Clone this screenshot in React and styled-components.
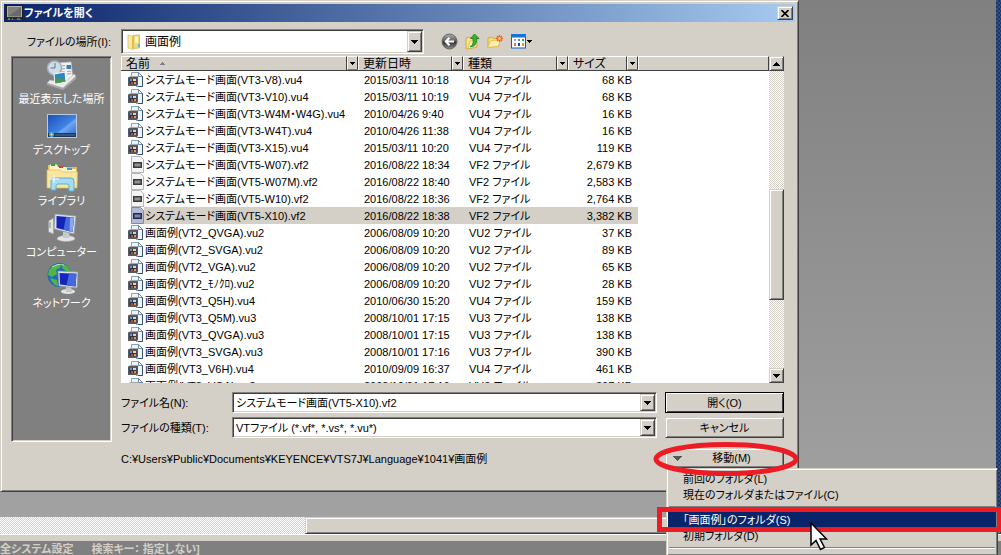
import { useState } from 'react';
import styled, { createGlobalStyle, css } from 'styled-components';

const GlobalStyle = createGlobalStyle`
  * {
    box-sizing: border-box;
  }

  body {
    margin: 0;
    overflow: hidden;
  }

  body, button, input, select {
    font-family: "Liberation Sans", "Noto Sans CJK JP", sans-serif;
    font-size: 11px;
    line-height: 16px;
    font-feature-settings: "palt";
    color: #000;
  }
`;

const face = '#d4d0c8';

const raised = css`
  background: ${face};
  border: 1px solid;
  border-color: ${face} #404040 #404040 ${face};
  box-shadow: inset 1px 1px #fff, inset -1px -1px #808080;
`;

const sunken = css`
  border: 1px solid;
  border-color: #808080 #fff #fff #808080;
  box-shadow: inset 1px 1px #404040, inset -1px -1px ${face};
`;

const dither = css`
  background: repeating-conic-gradient(#fff 0 25%, ${face} 0 50%) 0 0 / 2px 2px;
`;

const Page = styled.div`
  display: flex;
  flex-direction: column;
  height: 100vh;
  overflow: hidden;
`;

const Workspace = styled.div`
  flex: 1;
  display: flex;
  align-items: flex-start;
  background: linear-gradient(#808080, #a2a2a2);
`;

const Desktop = styled.div`
  align-self: stretch;
  width: 5px;
  margin-left: 197px;
  background: repeating-conic-gradient(#1c3468 0 25%, #324f86 0 50%) 0 0 / 4px 4px;
`;

const Dialog = styled.section`
  ${raised}
  flex: 1;
  padding: 3px;
`;

const TitleBar = styled.header`
  display: flex;
  align-items: center;
  gap: 1px;
  height: 18px;
  padding: 0 2px;
  background: linear-gradient(90deg, #0a246a, #a6caf0);
`;

const Title = styled.h1`
  flex: 1;
  margin: 0;
  font-size: 11px;
  color: #fff;
`;

const CloseButton = styled.button`
  ${raised}
  display: grid;
  place-items: center;
  width: 16px;
  height: 14px;
  padding: 0;
`;

const Body = styled.div`
  display: grid;
  grid-template-columns: 101px 1fr;
  grid-template-rows: 25px auto;
  gap: 2px 9px;
  padding: 7px 11px 20px 7px;
`;

const LookInLabel = styled.label`
  align-self: center;
  padding-right: 1px;
  text-align: right;
  white-space: nowrap;
`;

const LookInRow = styled.div`
  display: flex;
  align-items: center;
  gap: 17px;
`;

const Combo = styled.div`
  ${sunken}
  display: grid;
  grid-template-columns: 1fr;
  flex: 0 0 ${(p) => p.$width || 'auto'};
  height: ${(p) => p.$height || 21}px;
  padding: 1px;
  background: #fff;

  > * {
    grid-area: 1 / 1;
  }
`;

const Select = styled.select`
  appearance: none;
  width: 100%;
  min-width: 0;
  padding: 0 18px 0 ${(p) => (p.$icon ? 22 : 2)}px;
  border: 0;
  background: none;
  font-size: ${(p) => (p.$icon ? 12 : 11)}px;
`;

const TextInput = styled.input`
  width: 100%;
  min-width: 0;
  padding: 0 18px 0 2px;
  border: 0;
  outline: 0;
  background: none;
`;

const ComboIcon = styled.span`
  align-self: center;
  justify-self: start;
  height: 16px;
  padding-left: 3px;
`;

const ComboArrow = styled.span`
  ${raised}
  justify-self: end;
  display: grid;
  place-items: center;
  width: 15px;
  pointer-events: none;
`;

const Toolbar = styled.div`
  display: flex;
  align-items: center;
  gap: 7px;
`;

const ToolButton = styled.button`
  display: flex;
  align-items: center;
  gap: 1px;
  padding: 0;
  border: 0;
  background: none;
`;

const Places = styled.nav`
  ${sunken}
  display: flex;
  flex-direction: column;
  gap: 2px;
  margin-bottom: 26px;
  padding-top: 1px;
  background: #808080;
`;

const Place = styled.a`
  display: flex;
  flex-direction: column;
  align-items: center;
  color: #fff;
  text-decoration: none;
  white-space: nowrap;
`;

const FileList = styled.div`
  display: flex;
  height: 327px;
  background: #fff;
`;

const TableArea = styled.div`
  flex: 1;
  overflow: hidden;
`;

const Table = styled.table`
  width: 100%;
  table-layout: fixed;
  border-collapse: collapse;
`;

const Col = styled.col`
  width: ${(p) => (p.$width ? `${p.$width}px` : 'auto')};
`;

const Th = styled.th`
  padding: 0;
  background: ${face};
  font-weight: normal;
  font-size: 12px;
  text-align: left;
`;

const HeadCell = styled.div`
  display: flex;
  height: 15px;
  line-height: 14px;
  border-bottom: 1px solid #404040;
`;

const HeadLabel = styled.span`
  flex: 1;
  display: flex;
  align-items: center;
  gap: 10px;
  padding-left: 4px;
  border-left: 1px solid #fff;
  border-top: 1px solid #fff;
  border-right: 1px solid #404040;
`;

const HeadButton = styled.button`
  display: grid;
  place-items: center;
  width: 11px;
  padding: 0;
  background: ${face};
  border: 1px solid;
  border-color: #fff #404040 #808080 #fff;
`;

const Td = styled.td`
  height: 17px;
  padding: 0 6px;
  text-align: ${(p) => p.$align || 'left'};
  white-space: nowrap;
  background: ${(p) => (p.$selected ? face : 'none')};
`;

const NameTd = styled.td`
  height: 17px;
  padding: 0 0 0 7px;
`;

const NameCell = styled.div`
  display: flex;
  height: 17px;
`;

const FileName = styled.span`
  flex: 1;
  padding: 1px 0 0 1px;
  white-space: nowrap;
  background: ${(p) => (p.$selected ? face : 'none')};
`;

const ScrollBar = styled.div`
  display: flex;
  flex-direction: column;
  width: 15px;
`;

const ScrollButton = styled.button`
  ${raised}
  display: grid;
  place-items: center;
  width: 15px;
  height: 15px;
  padding: 0;
`;

const ScrollTrack = styled.div`
  ${dither}
  flex: 1;
  display: grid;
  grid-template-rows: 118fr 111fr 68fr;
`;

const ScrollThumb = styled.div`
  ${raised}
  grid-row: 2;
`;

const Form = styled.form`
  display: grid;
  grid-template-columns: 103px 1fr 119px;
  gap: 4px 8px;
  align-items: center;
  margin-top: 9px;
`;

const Button = styled.button`
  ${raised}
  width: 100%;
  height: 21px;
  padding: 0;
  ${(p) => p.$primary && css`
    border-color: #000;
    box-shadow: inset 1px 1px #fff, inset -1px -1px #404040;
  `}
`;

const MoveButton = styled(Button)`
  display: grid;
  grid-template-columns: 16px 1fr;
  align-items: center;
  height: 20px;
  padding: 0 8px 0 6px;
`;

const PathText = styled.p`
  grid-column: span 2;
  margin: 8px 0 0;
  white-space: nowrap;
`;

const MoveBox = styled.div`
  position: relative;
  margin-top: 6px;
`;

const Ring = styled.svg`
  position: absolute;
  top: -7px;
  left: -12px;
  width: 146px;
  height: 36px;
  z-index: 2;
  pointer-events: none;
`;

const Menu = styled.ul`
  ${raised}
  position: absolute;
  top: 100%;
  left: 1px;
  z-index: 1;
  width: 332px;
  margin: 0;
  padding: 2px 1px;
  list-style: none;
`;

const MenuItem = styled.li`
  position: relative;
  background: ${(p) => (p.$active ? '#0a246a' : 'none')};
`;

const MenuButton = styled.button`
  display: block;
  width: 100%;
  height: 16px;
  padding: 0 15px;
  border: 0;
  background: none;
  text-align: left;
  color: ${(p) => (p.$active ? '#fff' : '#000')};
`;

const MenuLine = styled.li`
  height: 2px;
  margin: 3px 1px 4px;
  border-top: 1px solid #808080;
  border-bottom: 1px solid #fff;
`;

const Frame = styled.span`
  position: absolute;
  inset: -5px -6px -4px -11px;
  border: 5px solid #ed1c24;
  z-index: 1;
  pointer-events: none;
`;

const Cursor = styled.svg`
  position: absolute;
  top: 10px;
  left: 142px;
  z-index: 2;
  pointer-events: none;
`;

const HorizontalScroll = styled.div`
  ${dither}
  display: grid;
  grid-template-columns: 305px 1fr;
  height: 17px;
`;

const HorizontalThumb = styled.div`
  ${raised}
  grid-column: 2;
`;

const Divider = styled.div`
  height: 7px;
  background: ${face};
  border-top: 1px solid #fff;
`;

const StatusBar = styled.footer`
  display: flex;
  gap: 18px;
  height: 14px;
  overflow: hidden;
  background: #808080;
  color: ${face};
  font-weight: bold;
`;

function Triangle({ up, size = 7, color = '#000' }) {
  const h = Math.ceil(size / 2);
  const points = up ? `0,${h} ${size},${h} ${size / 2},0` : `0,0 ${size},0 ${size / 2},${h}`;
  return (
    <svg width={size} height={h} aria-hidden="true">
      <polygon points={points} fill={color} shapeRendering="crispEdges" />
    </svg>
  );
}

const MonitorIcon = () => (
  <svg width="17" height="16" viewBox="0 0 17 16" aria-hidden="true">
    <rect x=".5" y=".5" width="16" height="13" fill="#2f2f2f" stroke="#1c1c1c" />
    <rect x="1.5" y="1.5" width="14" height="10" fill="#808080" stroke="#b0b0b0" />
    <path d="M2 11.500L15 2v9.500z" fill="#6a6a6a" />
    <path d="M1 14.500h15" stroke="#444" />
    <path d="M2 14h2M6 14h1" stroke="#8ad07a" />
    <path d="M11 14h3" stroke="#b5a58a" />
  </svg>
);

const FolderIcon = () => (
  <svg width="17" height="16" viewBox="0 0 17 16" aria-hidden="true">
    <path d="M7 1.5l6.5-.5v13L7 14.5z" fill="#f4d978" stroke="#cfa943" strokeWidth=".7" />
    <path d="M9 3l3-.5v6l-3 .5z" fill="#fff6cf" />
    <path d="M2 1l5.5 1.5v13L2 14z" fill="#fbe9a4" stroke="#d9b957" strokeWidth=".7" />
    <path d="M6 3v12l2-1V2z" fill="#e4be55" />
    <rect x="12" y="10" width="2" height="3" fill="#6ab0d8" />
  </svg>
);

const BackIcon = () => (
  <svg width="17" height="17" viewBox="0 0 17 17" aria-hidden="true">
    <defs>
      <linearGradient id="back" x2="0" y2="1">
        <stop stopColor="#b0b0b0" />
        <stop offset=".45" stopColor="#606060" />
        <stop offset=".55" stopColor="#333" />
        <stop offset="1" stopColor="#909090" />
      </linearGradient>
    </defs>
    <circle cx="8.5" cy="8.5" r="7.5" fill="url(#back)" stroke="#666" />
    <path d="M13 8.5H5M8.500 4.800L4.800 8.500l3.700 3.700" fill="none" stroke="#fff" strokeWidth="2" />
  </svg>
);

const UpIcon = () => (
  <svg width="15" height="17" viewBox="0 0 15 17" aria-hidden="true">
    <path d="M1 5l4-1 2 1.5 5-1.500v10l-9 2H1z" fill="#f8e08a" stroke="#d6ab3d" />
    <path d="M3 15.5L5 8l8-2-2 8z" fill="#fdf0ae" stroke="#d6ab3d" strokeWidth=".6" />
    <path d="M5 13.500C8 13 8.500 10 8 5.500H5.500L9.500 1l4.500 4.500h-2.500c.5 5-1.500 8.500-6.500 8z" fill="#35b52d" stroke="#16791a" strokeWidth=".8" />
  </svg>
);

const NewFolderIcon = () => (
  <svg width="17" height="16" viewBox="0 0 17 16" aria-hidden="true">
    <path d="M1 13.5V4l4-1 2 1.5 5-.5v8z" fill="#f6d978" stroke="#d6ab3d" />
    <path d="M1 13.5L3.500 7l10-1.500-2 6.500z" fill="#fdf0ae" stroke="#dfbb55" strokeWidth=".7" />
    <path d="M12.500 1v7M9 4.500h7M10 2l5 5M15 2l-5 5" stroke="#f0622d" strokeWidth="1.300" />
    <circle cx="12.5" cy="4.5" r="1.3" fill="#ffe27a" />
  </svg>
);

const ViewIcon = () => (
  <svg width="15" height="15" viewBox="0 0 15 15" aria-hidden="true">
    <rect x=".5" y=".5" width="14" height="13.5" fill="#fff" stroke="#0b62c4" />
    <rect width="15" height="3.5" fill="#1673d8" />
    <path d="M3 5h2v2H3z" fill="#9a9adf" />
    <path d="M7 5h2v2H7z" fill="#5088d8" />
    <path d="M11 5h2v2h-2z" fill="#2fa04c" />
    <path d="M3 9h2v3H3z" fill="#e7776a" />
    <path d="M7 9h2v3H7z" fill="#1b3fbb" />
    <path d="M11 9h2v3h-2z" fill="#d3a52b" />
  </svg>
);

const VuIcon = () => (
  <svg width="16" height="17" viewBox="0 0 16 17" aria-hidden="true">
    <path d="M3.500 5V1.500h7l4 4v10H8" fill="#eef4fa" stroke="#8aa3bd" />
    <path d="M10.500 1.500v4h4z" fill="#fff" stroke="#55708f" strokeWidth=".8" />
    <path d="M14.500 5.500v10H10" fill="none" stroke="#35506e" />
    <path d="M0 6.500l2-1h8v8l-1 1.500H0z" fill="#5a5a5a" />
    <path d="M1.500 8h7v5h-7z" fill="#26364f" />
    <path d="M2 8h2v2H2z" fill="#6c96cd" />
    <path d="M5 8h3v2H5z" fill="#dcd4cc" />
    <path d="M3 11h2v2H3z" fill="#c84732" />
    <path d="M6 11h2v2H6z" fill="#e09a5a" />
  </svg>
);

const VfIcon = ({ selected }) => (
  <svg width="16" height="17" viewBox="0 0 16 17" aria-hidden="true">
    <path d="M3.5.5h9l3 3v13h-12z" fill={selected ? '#b4bad4' : '#f4f4f4'} stroke={selected ? '#8089ac' : '#b5b5b5'} />
    <rect x="5" y="6" width="9" height="6" fill={selected ? '#252c48' : '#3a3a3a'} />
    <rect x="6.5" y="7.5" width="6" height="3" fill={selected ? '#7d86a6' : '#8c958c'} />
  </svg>
);

const RecentIcon = () => (
  <svg width="32" height="33" viewBox="0 0 32 33" aria-hidden="true">
    <path d="M13 5l12-1 2 18-13 4z" fill="#f1f1f1" stroke="#c4c4c4" strokeWidth=".7" />
    <path d="M15 8l4-.4M15 11l4-.4M15 14l4-.4M21 13.500l4-.4M21 16l4-.4" stroke="#9aa5ae" />
    <rect x="20.5" y="7" width="4.5" height="4" fill="#3a7fb4" />
    <circle cx="8.500" cy="10" r="7" fill="#cfdde6" stroke="#9fb1bd" strokeWidth="1.5" />
    <path d="M9 5v5H4.500" fill="none" stroke="#5b7588" />
    <path d="M1 25l16 5L30 18v3L17 32 1 27z" fill="#a5a5a5" />
    <path d="M1 25l3-3 14 3 10-9 2 2-13 12z" fill="#ececec" stroke="#aaa" strokeWidth=".5" />
    <path d="M8 16l11-2 1 10-11 2z" fill="#2d86c6" stroke="#fff" />
    <path d="M8.700 21l4-1 6.500 1.500.300 2-10 2z" fill="#4b9a49" />
  </svg>
);

const DesktopIcon = () => (
  <svg width="32" height="33" viewBox="0 0 32 33" aria-hidden="true">
    <defs>
      <linearGradient id="screen" x2="1" y2="1">
        <stop stopColor="#1d4fb4" />
        <stop offset=".55" stopColor="#3f83e4" />
        <stop offset=".6" stopColor="#6ea7f2" />
        <stop offset="1" stopColor="#2460c8" />
      </linearGradient>
    </defs>
    <rect x="1.500" y="5.500" width="29" height="23" fill="url(#screen)" stroke="#bcc9d8" />
    <rect x="2" y="24" width="28" height="4" fill="#1e3658" />
    <path d="M9 26h20" stroke="#53739c" />
    <circle cx="5.500" cy="25.500" r="2.500" fill="#35a6e8" />
    <path d="M5.500 23.500v4M3.500 25.500h4" stroke="#f5d35a" strokeWidth=".7" />
  </svg>
);

const LibraryIcon = () => (
  <svg width="32" height="33" viewBox="0 0 32 33" aria-hidden="true">
    <path d="M2 5h8l1 2h20v21H2z" fill="#e3bd5b" />
    <path d="M4 4.500h7l1 2.500h8l1 2h9v3H3z" fill="#fdf3c4" />
    <path d="M5 4h4v2H5z" fill="#37a52e" />
    <path d="M13 6h4v2h-4z" fill="#d3402c" />
    <path d="M21 8h5v2h-5z" fill="#3a9ae2" />
    <path d="M1 10h13l2 2h15.500l-.5 16H1z" fill="#fae69e" stroke="#dcb857" strokeWidth=".7" />
    <path d="M5 20q0-2 2-2h18q3 0 3 3v10h-5v-5q0-2-2-2H12q-2 0-2 2v4H5z" fill="#a5dcf4" stroke="#5eaed2" />
    <path d="M8 15v8M4 19h9" stroke="#fff" />
  </svg>
);

const ComputerIcon = () => (
  <svg width="32" height="33" viewBox="0 0 32 33" aria-hidden="true">
    <path d="M2.500 10l5-3v16l-5-2z" fill="#e4e4e4" stroke="#9c9c9c" strokeWidth=".7" />
    <path d="M4 11v6" stroke="#5da854" />
    <ellipse cx="20" cy="27.500" rx="9" ry="3" fill="#e3e6e8" stroke="#a9a9a9" strokeWidth=".6" />
    <path d="M17 21h6l1 6h-7z" fill="#c7cbd0" />
    <path d="M9 3l21 2-2 18-20-5z" fill="#dce2e9" stroke="#8f98a5" strokeWidth=".7" />
    <path d="M10.500 5L28 6.500 26.500 21l-16-4z" fill="#1125b8" />
    <path d="M20 6l8 .500-1.500 14.500-9-2.200z" fill="#4668e0" />
    <path d="M24 6.200l4 .3-1.500 14.500-3-.700z" fill="#88a4f4" />
  </svg>
);

const NetworkIcon = () => (
  <svg width="32" height="33" viewBox="0 0 32 33" aria-hidden="true">
    <circle cx="13.500" cy="13" r="12" fill="#2668bb" />
    <path d="M3 8q5-6 10-6l2 3-5 3 1 4-5 3-4-2zM17 2q6 2 8 8l-5-1-4-3zM4 16l7 2 1 6q-5-1-8-8z" fill="#4db844" />
    <path d="M6 5q6-4 12-2" stroke="#b9e6c2" fill="none" />
    <ellipse cx="22" cy="29.500" rx="7" ry="2.500" fill="#e2e5e8" />
    <path d="M20 25h5l1 5h-6z" fill="#c3c8cd" />
    <path d="M12 9l20 1-1 16-18-2z" fill="#dce2e9" stroke="#8f98a5" strokeWidth=".7" />
    <path d="M13.500 11l17 .7-1 12.800-15.500-2z" fill="#1228bd" />
    <path d="M23 11.300l7.500.4-1 12.800-9-1.200z" fill="#4568e0" />
  </svg>
);

const places = [
  { name: '最近表示した場所', Icon: RecentIcon },
  { name: 'デスクトップ', Icon: DesktopIcon },
  { name: 'ライブラリ', Icon: LibraryIcon },
  { name: 'コンピューター', Icon: ComputerIcon },
  { name: 'ネットワーク', Icon: NetworkIcon },
];

const files = [
  ['システムモード画面(VT3-V8).vu4', '2015/03/11 10:18', '68 KB'],
  ['システムモード画面(VT3-V10).vu4', '2015/03/11 10:19', '68 KB'],
  ['システムモード画面(VT3-W4M・W4G).vu4', '2010/04/26 9:40', '16 KB'],
  ['システムモード画面(VT3-W4T).vu4', '2010/04/26 11:38', '16 KB'],
  ['システムモード画面(VT3-X15).vu4', '2015/03/11 10:20', '119 KB'],
  ['システムモード画面(VT5-W07).vf2', '2016/08/22 18:34', '2,679 KB'],
  ['システムモード画面(VT5-W07M).vf2', '2016/08/22 18:40', '2,583 KB'],
  ['システムモード画面(VT5-W10).vf2', '2016/08/22 18:36', '2,764 KB'],
  ['システムモード画面(VT5-X10).vf2', '2016/08/22 18:38', '3,382 KB'],
  ['画面例(VT2_QVGA).vu2', '2006/08/09 10:20', '37 KB'],
  ['画面例(VT2_SVGA).vu2', '2006/08/09 10:20', '89 KB'],
  ['画面例(VT2_VGA).vu2', '2006/08/09 10:20', '65 KB'],
  ['画面例(VT2_ﾓﾉｸﾛ).vu2', '2006/08/09 10:20', '28 KB'],
  ['画面例(VT3_Q5H).vu4', '2010/06/30 15:20', '159 KB'],
  ['画面例(VT3_Q5M).vu3', '2008/10/01 17:15', '138 KB'],
  ['画面例(VT3_QVGA).vu3', '2008/10/01 17:15', '138 KB'],
  ['画面例(VT3_SVGA).vu3', '2008/10/01 17:16', '390 KB'],
  ['画面例(VT3_V6H).vu4', '2010/09/09 16:37', '461 KB'],
  ['画面例(VT3_VGA).vu3', '2008/10/01 17:16', '307 KB'],
];

const columns = [
  { name: '名前', width: 237, sorted: true },
  { name: '更新日時', width: 105 },
  { name: '種類', width: 105 },
  { name: 'サイズ', width: 70 },
];

const typeOf = (name) => `${name.slice(-3).toUpperCase()} ファイル`;

export default function App() {
  const [selected, setSelected] = useState('システムモード画面(VT5-X10).vf2');

  return (
    <Page>
      <GlobalStyle />
      <Workspace>
        <Dialog aria-label="ファイルを開く">
          <TitleBar>
            <MonitorIcon />
            <Title>ファイルを開く</Title>
            <CloseButton aria-label="閉じる">
              <svg width="8" height="7" viewBox="0 0 8 7" aria-hidden="true">
                <path d="M.5 0l7 7M7.5 0l-7 7" stroke="#000" strokeWidth="1.6" />
              </svg>
            </CloseButton>
          </TitleBar>

          <Body>
            <LookInLabel htmlFor="lookIn">ファイルの場所(I):</LookInLabel>
            <LookInRow>
              <Combo $width="303px" $height={25}>
                <ComboIcon>
                  <FolderIcon />
                </ComboIcon>
                <Select id="lookIn" $icon>
                  <option>画面例</option>
                </Select>
                <ComboArrow>
                  <Triangle />
                </ComboArrow>
              </Combo>
              <Toolbar>
                <ToolButton aria-label="戻る"><BackIcon /></ToolButton>
                <ToolButton aria-label="上へ"><UpIcon /></ToolButton>
                <ToolButton aria-label="新しいフォルダー"><NewFolderIcon /></ToolButton>
                <ToolButton aria-label="表示">
                  <ViewIcon />
                  <Triangle size={5} />
                </ToolButton>
              </Toolbar>
            </LookInRow>

            <Places>
              {places.map(({ name, Icon }) => (
                <Place href="#" key={name}>
                  <Icon />
                  {name}
                </Place>
              ))}
            </Places>

            <div>
              <FileList>
                <TableArea>
                  <Table>
                    <colgroup>
                      {columns.map((c) => <Col key={c.name} $width={c.width} />)}
                      <Col />
                    </colgroup>
                    <thead>
                      <tr>
                        {columns.map((c) => (
                          <Th key={c.name}>
                            <HeadCell>
                              <HeadLabel>
                                {c.name}
                                {c.sorted && <Triangle up size={5} color="#808080" />}
                              </HeadLabel>
                              <HeadButton aria-label={`${c.name}で絞り込む`}>
                                <Triangle size={5} />
                              </HeadButton>
                            </HeadCell>
                          </Th>
                        ))}
                        <Th>
                          <HeadCell><HeadLabel /></HeadCell>
                        </Th>
                      </tr>
                    </thead>
                    <tbody>
                      {files.map(([name, date, size]) => {
                        const on = name === selected;
                        return (
                          <tr key={name} onClick={() => setSelected(name)}>
                            <NameTd>
                              <NameCell>
                                {name.endsWith('vf2') ? <VfIcon selected={on} /> : <VuIcon />}
                                <FileName $selected={on}>{name}</FileName>
                              </NameCell>
                            </NameTd>
                            <Td $selected={on}>{date}</Td>
                            <Td $selected={on}>{typeOf(name)}</Td>
                            <Td $selected={on} $align="right">{size}</Td>
                            <td />
                          </tr>
                        );
                      })}
                    </tbody>
                  </Table>
                </TableArea>
                <ScrollBar>
                  <ScrollButton aria-label="上へスクロール"><Triangle up /></ScrollButton>
                  <ScrollTrack>
                    <ScrollThumb />
                  </ScrollTrack>
                  <ScrollButton aria-label="下へスクロール"><Triangle /></ScrollButton>
                </ScrollBar>
              </FileList>

              <Form onSubmit={(e) => e.preventDefault()}>
                <label htmlFor="fileName">ファイル名(N):</label>
                <Combo>
                  <TextInput
                    id="fileName"
                    value={selected}
                    onChange={(e) => setSelected(e.target.value)}
                  />
                  <ComboArrow>
                    <Triangle />
                  </ComboArrow>
                </Combo>
                <Button $primary type="submit">開く(O)</Button>

                <label htmlFor="fileType">ファイルの種類(T):</label>
                <Combo>
                  <Select id="fileType">
                    <option>VTファイル (*.vf*, *.vs*, *.vu*)</option>
                  </Select>
                  <ComboArrow>
                    <Triangle />
                  </ComboArrow>
                </Combo>
                <Button type="button">キャンセル</Button>

                <PathText>C:¥Users¥Public¥Documents¥KEYENCE¥VTS7J¥Language¥1041¥画面例</PathText>
                <MoveBox>
                  <MoveButton type="button">
                    <Triangle size={10} color="#555" />
                    移動(M)
                  </MoveButton>
                  <Menu>
                    <MenuItem><MenuButton>前回のフォルダ(L)</MenuButton></MenuItem>
                    <MenuItem><MenuButton>現在のフォルダまたはファイル(C)</MenuButton></MenuItem>
                    <MenuLine />
                    <MenuItem $active>
                      <MenuButton $active>「画面例」のフォルダ(S)</MenuButton>
                      <Frame />
                      <Cursor width="18" height="29" viewBox="0 0 18 29" aria-hidden="true">
                        <path
                          d="M1 1v22l5-4.5 4.500 9 4-2-4.500-8.500h6.500z"
                          fill="#fff"
                          stroke="#000"
                          strokeWidth="1.5"
                        />
                      </Cursor>
                    </MenuItem>
                    <MenuItem><MenuButton>初期フォルダ(D)</MenuButton></MenuItem>
                    <MenuLine />
                  </Menu>
                  <Ring viewBox="0 0 146 36" aria-hidden="true">
                    <ellipse cx="73" cy="18" rx="70" ry="14.5" fill="none" stroke="#ed1c24" strokeWidth="5" />
                  </Ring>
                </MoveBox>
              </Form>
            </div>
          </Body>
        </Dialog>
        <Desktop />
      </Workspace>

      <HorizontalScroll>
        <HorizontalThumb />
      </HorizontalScroll>
      <Divider />
      <StatusBar>
        <span>全システム設定</span>
        <span>検索キー： 指定しない]</span>
      </StatusBar>
    </Page>
  );
}
